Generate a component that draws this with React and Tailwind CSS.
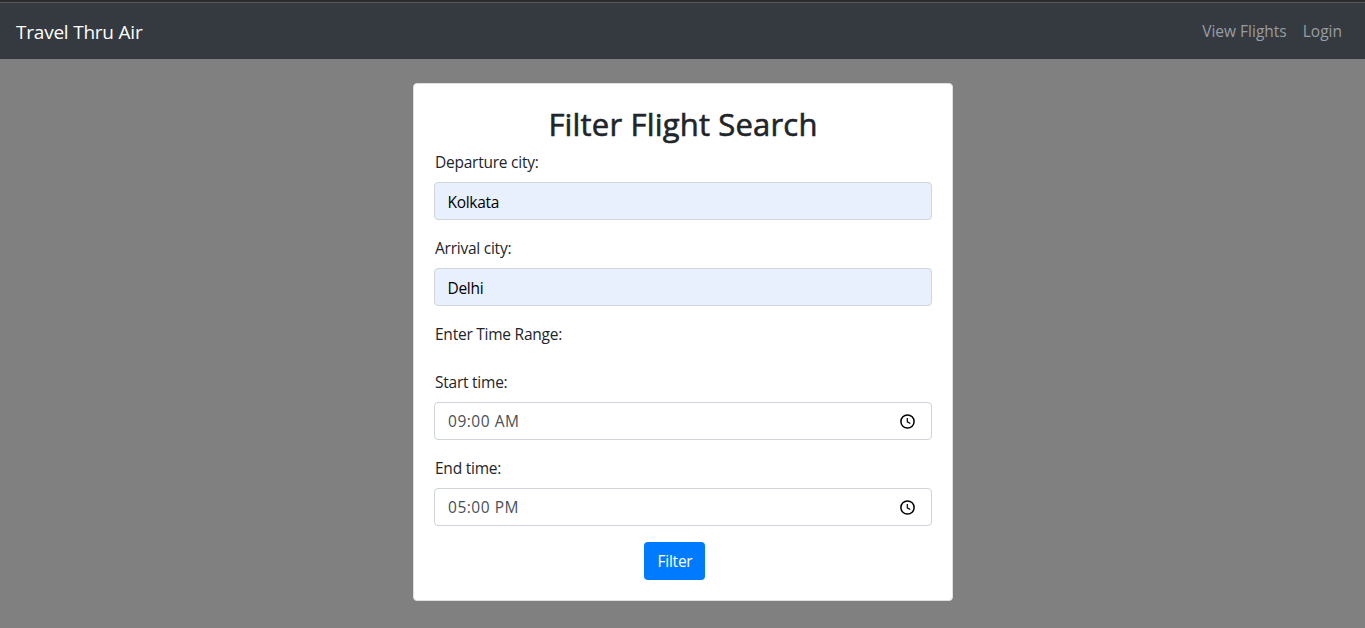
import React from "react";

function ClockIcon() {
  return (
    <svg width="16" height="16" viewBox="0 0 16 16" fill="none" stroke="#000" className="shrink-0">
      <circle cx="8.5" cy="8.5" r="6.6" strokeWidth="1.5" />
      <path d="M8.3 5V8.8L11.3 10.6" strokeWidth="1.2" />
    </svg>
  );
}

function Label({ children }) {
  return <div className="mb-2 h-6 pl-px leading-6 whitespace-nowrap">{children}</div>;
}

function CityField({ label, value }) {
  return (
    <div className="mb-4">
      <Label>{label}</Label>
      <div className="flex h-[38px] items-center rounded border border-[#ced4da] bg-[#e8f0fe] px-[12.5px] pt-1 tracking-[-0.3px] text-black">
        {value}
      </div>
    </div>
  );
}

function TimeField({ label, value }) {
  return (
    <div className="mb-4">
      <Label>{label}</Label>
      <div className="flex h-[38px] items-center justify-between rounded border border-[#ced4da] bg-white pr-4 pl-[13px] text-[#495057]">
        <span className="pt-0.5 tracking-[0.52px]">{value}</span>
        <ClockIcon />
      </div>
    </div>
  );
}

export default function App() {
  return (
    <div className="flex h-[628px] flex-col overflow-hidden bg-[#808080] font-['Open_Sans','Noto_Sans',sans-serif] text-[15.5px] tracking-[-0.24px] text-[#212529]">
      <div className="h-[3px] shrink-0 border-b border-[#5a5a5a] bg-[#2b2b2b]" />
      <nav className="flex h-14 shrink-0 items-center justify-between bg-[#343a40] pr-[23px] pl-4">
        <a className="pt-0.5 text-[19px] leading-[30px] tracking-[-0.22px] text-white">Travel Thru Air</a>
        <div className="flex gap-4 leading-6 tracking-[0px] text-[#9a9da0]">
          <a>View Flights</a>
          <a>Login</a>
        </div>
      </nav>
      <main className="flex justify-center pt-6 pl-px">
        <section className="h-[518px] w-[540px] rounded border border-[#dfdfdf] bg-white p-5">
          <h2 className="mb-2 h-[38px] text-center text-[31px] leading-[41px] font-medium tracking-[0.18px] [-webkit-text-stroke:0.6px_#212529]">
            Filter Flight Search
          </h2>
          <CityField label="Departure city:" value="Kolkata" />
          <CityField label="Arrival city:" value="Delhi" />
          <div className="mb-6">
            <Label>Enter Time Range:</Label>
          </div>
          <TimeField label="Start time:" value="09:00 AM" />
          <TimeField label="End time:" value="05:00 PM" />
          <button className="ml-[210px] flex h-[38px] w-[61px] items-center justify-center rounded bg-[#007bff] pt-0.5 pl-px text-white">
            Filter
          </button>
        </section>
      </main>
    </div>
  );
}
